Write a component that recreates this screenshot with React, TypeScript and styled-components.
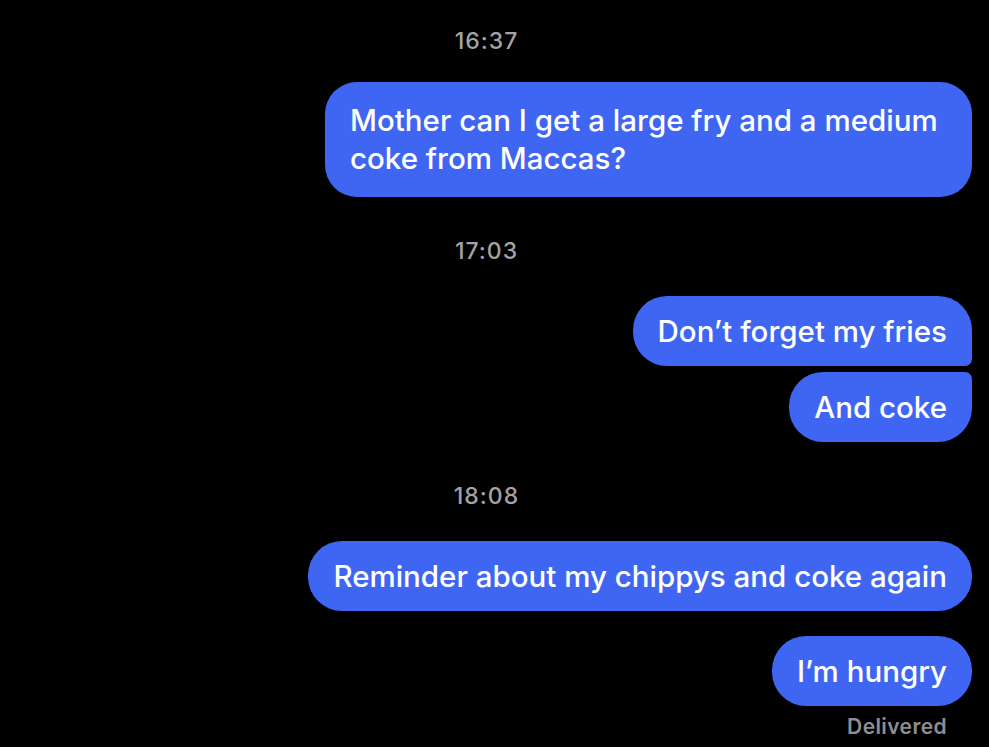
import React from 'react';
import styled, { createGlobalStyle } from 'styled-components';

const GlobalStyle = createGlobalStyle`
  html, body {
    margin: 0;
    background: #000;
  }
  body {
    font-family: Inter, "Noto Sans", "Liberation Sans", sans-serif;
  }
`;

const Thread = styled.div`
  display: flex;
  flex-direction: column;
  align-items: flex-end;
  padding: 26px 17px 0 0;
  width: 989px;
  height: 747px;
  box-sizing: border-box;
  overflow: hidden;
`;

const Stamp = styled.div`
  align-self: stretch;
  text-align: center;
  padding-left: 1px;
  margin: 39px 0 30px;
  font-size: 23px;
  letter-spacing: 1px;
  line-height: 30px;
  font-weight: 500;
  color: #a2a2a7;

  &:first-child {
    margin: 0 0 26px;
  }
`;

type Tail = 'none' | 'top' | 'bottom';

const Bubble = styled.div<{ $tail?: Tail; $gap?: number }>`
  max-width: 640px;
  margin-top: ${(p) => p.$gap ?? 0}px;
  padding: 16px 25px;
  background: #3f66f2;
  color: #fff;
  font-size: 29.5px;
  line-height: 38px;
  font-weight: 500;
  white-space: nowrap;
  border-radius: 34px;
  border-top-right-radius: ${(p) => (p.$tail === 'top' ? '7px' : '34px')};
  border-bottom-right-radius: ${(p) => (p.$tail === 'bottom' ? '7px' : '34px')};
`;

const TallBubble = styled(Bubble)`
  max-width: 597px;
  white-space: normal;
  padding: 19px 25px 20px;
  line-height: 38px;
  border-radius: 32px;
`;

const Status = styled.div`
  margin: 8px 25px 0 0;
  font-size: 21px;
  letter-spacing: 0.4px;
  line-height: 26px;
  font-weight: 600;
  color: #8e8e93;
`;

export default function App() {
  return (
    <>
      <GlobalStyle />
      <Thread>
        <Stamp>16:37</Stamp>
        <TallBubble>Mother can I get a large fry and a medium coke from Maccas?</TallBubble>

        <Stamp>17:03</Stamp>
        <Bubble $tail="bottom">Don’t forget my fries</Bubble>
        <Bubble $tail="top" $gap={6}>And coke</Bubble>

        <Stamp>18:08</Stamp>
        <Bubble>Reminder about my chippys and coke again</Bubble>
        <Bubble $gap={25}>I’m hungry</Bubble>
        <Status>Delivered</Status>
      </Thread>
    </>
  );
}
